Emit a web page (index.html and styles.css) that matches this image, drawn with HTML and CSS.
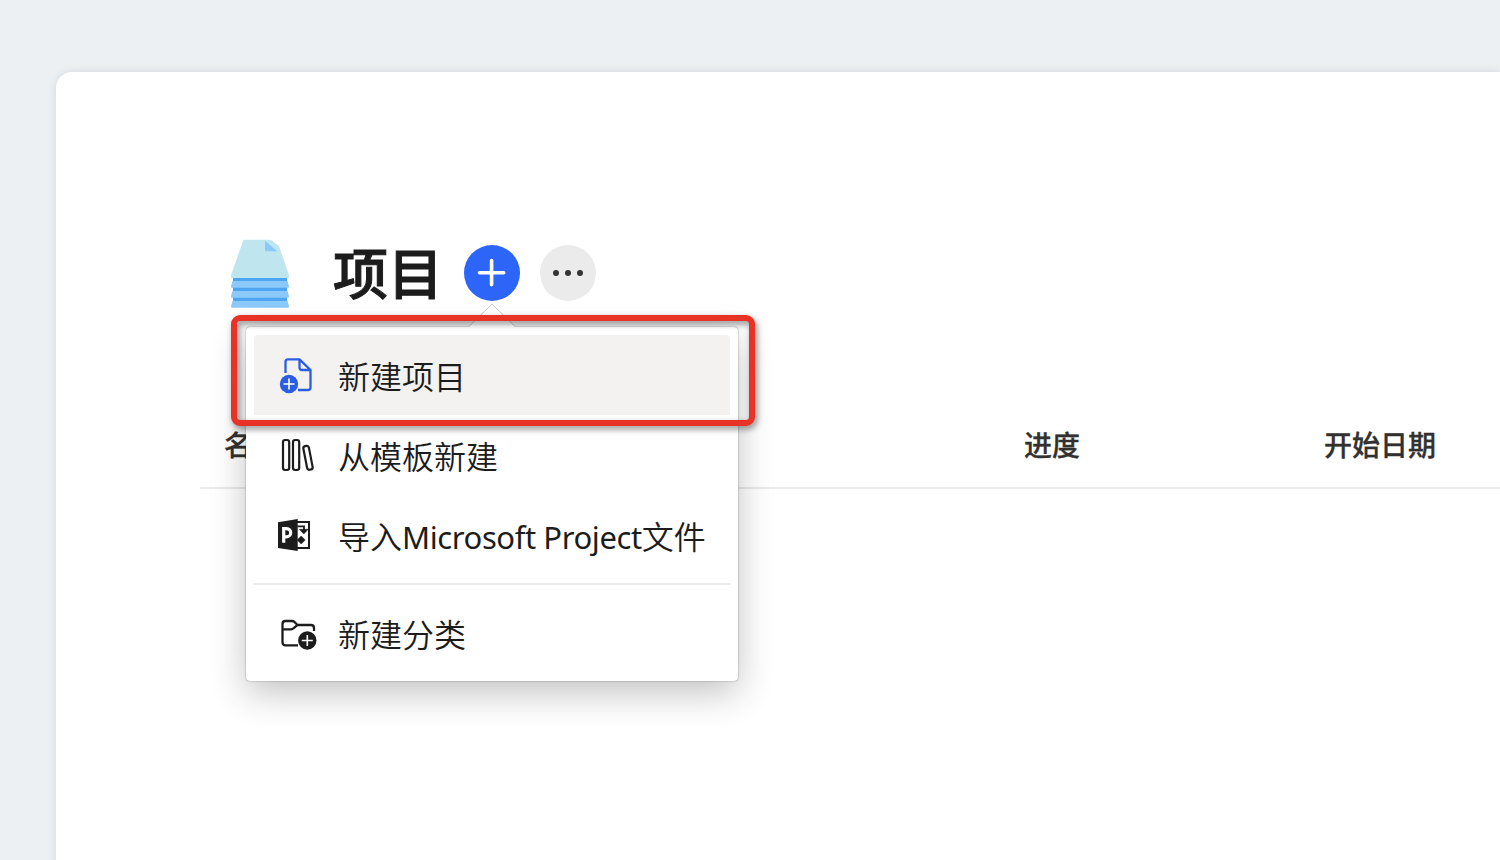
FILE: index.html
```html
<!DOCTYPE html>
<html lang="zh-CN">
<head>
<meta charset="utf-8">
<title>项目</title>
<link rel="stylesheet" href="styles.css">
</head>
<body>
<main class="panel">
  <header class="heading">
    <svg class="logo" width="60" height="70" viewBox="0 0 60 70">
      <path d="M3 38h54v30H3z" fill="#4ea6f3"/>
      <path d="M2.500 42h55l1.500 5.300q.3 1.500-1 1.500H2q-1.300 0-1-1.500zM2.500 52h55l1.500 5.300q.3 1.500-1 1.500H2q-1.300 0-1-1.500zM2.500 62h55l1.500 5.300q.3 1.500-1 1.500H2q-1.300 0-1-1.500z" fill="#8ac9f9"/>
      <path d="M15 .8h24q2 0 3.500 1.200l6 4.800 1.500 3 9 26.500q.8 2.700-1.800 2.700H2.800Q.2 39 1 36.300L13 2q.5-1.200 2-1.200z" fill="#bfe6ee"/>
      <path d="M35 2l12.500 10.200H36q-1 0-1-1z" fill="#8ac9f9"/>
    </svg>
    <h1 class="title">项目</h1>
    <div class="add-wrap">
      <button class="round add" aria-label="新建">
        <svg width="56" height="56" viewBox="0 0 56 56" fill="none" stroke="#fff" stroke-width="3.600" stroke-linecap="round"><path d="M15.500 27.700h24.200M27.600 15.600v24.200"/></svg>
      </button>
      <div class="menu">
        <svg class="arrow" width="48" height="25" viewBox="0 0 48 25"><path d="M1 23.500L24 1 47 23.500V25H1z" fill="#fff"/><path d="M1 23.500L24 1 47 23.500" fill="none" stroke="#c6c6c6" stroke-width="1"/></svg>
        <div class="item active">
          <svg class="icon" width="40" height="40" viewBox="0 0 40 40" fill="none" stroke="#2a5de0" stroke-width="2.300" stroke-linejoin="round">
            <path d="M8.500 18V6.900q0-2.500 2.500-2.500h11.500L33.500 15v17.500q0 2.500-2.500 2.500H21M22.500 4.500v8q0 2.500 2.500 2.500h8.500"/>
            <circle cx="12" cy="29" r="9.200" fill="#2a5de0" stroke="none"/>
            <path d="M6.500 29h11M12 23.500v11" stroke="#fff" stroke-width="1.600"/>
          </svg>
          <span>新建项目</span>
        </div>
        <div class="item">
          <svg class="icon" width="40" height="40" viewBox="0 0 40 40" fill="none" stroke="#1c1c1c" stroke-width="2.200">
            <rect x="6" y="5" width="6.200" height="30" rx="2.200"/><rect x="16" y="5" width="6.200" height="30" rx="2.200"/>
            <rect x="28.200" y="10.800" width="5.600" height="24" rx="2.200" transform="rotate(-11 31 22.800)"/>
          </svg>
          <span>从模板新建</span>
        </div>
        <div class="item">
          <svg class="icon" width="40" height="40" viewBox="0 0 40 40">
            <path d="M20 7h12v26H20" fill="none" stroke="#1c1c1c" stroke-width="2"/>
            <path d="M1 7.200L20.700 4v32L1 33z" fill="#1c1c1c"/>
            <path d="M6.700 27.700V13.600h2.800c5.600 0 5.600 8.200 0 8.200H6.700" fill="none" stroke="#fff" stroke-width="3.200"/>
            <path d="M20.500 11.300H27v4" fill="none" stroke="#1c1c1c" stroke-width="1.800"/>
            <path d="M22.300 14.300h9l-4.500 4.700zM24.200 21l4 4-4 4-4-4z" fill="#1c1c1c" stroke="#1c1c1c" stroke-width=".5"/>
          </svg>
          <span class="import">导入<span class="latin">Microsoft Project</span>文件</span>
        </div>
        <div class="divider"></div>
        <div class="item">
          <svg class="icon" width="40" height="40" viewBox="0 0 40 40" fill="none" stroke="#1c1c1c" stroke-width="2.300" stroke-linejoin="round">
            <path d="M21 32.300H8.500q-3 0-3-3V11q0-3 3-3H15q1.500 0 2.500 1l3 3H34q3 0 3 3v3M5.500 16.300H14q1.500 0 2.500-1l4-3.500"/>
            <circle cx="30.300" cy="27.500" r="9.200" fill="#1c1c1c" stroke="none"/>
            <path d="M24.800 27.500h11M30.300 22v11" stroke="#fff" stroke-width="1.600"/>
          </svg>
          <span>新建分类</span>
        </div>
        <div class="highlight"></div>
      </div>
    </div>
    <button class="round more" aria-label="更多"><i></i><i></i><i></i></button>
  </header>
  <div class="columns">
    <span>名称</span><span>进度</span><span>开始日期</span>
  </div>
</main>
</body>
</html>
```

FILE: styles.css
```css
* { box-sizing: border-box; }
body {
  margin: 0;
  height: 860px;
  overflow: hidden;
  padding: 72px 0 0 56px;
  background: #ecf0f3;
  font-family: "Noto Sans CJK SC", sans-serif;
  color: #1c1c1c;
}
.panel {
  height: 800px;
  padding: 167px 0 0 144px;
  background: #fff;
  border-radius: 16px 0 0 0;
  box-shadow: 0 0 8px rgba(40, 60, 80, .12);
}
.heading {
  display: flex;
  align-items: flex-start;
  height: 70px;
  padding-left: 30px;
}
.title {
  margin: 0 0 0 43px;
  width: 111px;
  font-size: 55px;
  line-height: 62px;
  font-weight: 500;
  -webkit-text-stroke: 1px currentColor;
  white-space: nowrap;
}
.add-wrap { position: relative; margin: 6px 20px 0; }
.round {
  display: flex;
  align-items: center;
  justify-content: center;
  width: 56px;
  height: 56px;
  padding: 0;
  border: 0;
  border-radius: 50%;
}
.add { background: #2d65f8; }
.more { margin-top: 6px; background: #ebebeb; gap: 6px; }
.more i { width: 6px; height: 6px; border-radius: 50%; background: #333; }
.menu {
  position: absolute;
  z-index: 2;
  top: 82px;
  left: -218px;
  width: 492px;
  height: 354px;
  padding: 8px;
  background: #fff;
  border-radius: 4px;
  box-shadow: 0 0 1.5px rgba(0, 0, 0, .55), 0 12px 36px rgba(0, 0, 0, .24);
}
.arrow { position: absolute; left: 222px; top: -24px; }
.item {
  display: flex;
  align-items: center;
  height: 80px;
  padding-left: 23px;
  font-size: 32px;
  font-weight: 350;
  line-height: 48px;
  white-space: nowrap;
}
.active { background: #f3f2f0; border-radius: 4px 4px 0 0; }
.icon { flex: none; margin-right: 21px; }
.import { padding-top: 2px; }
.latin {
  font-family: "Noto Sans", sans-serif;
  font-size: 31px;
  font-weight: 400;
  letter-spacing: -.41px;
}
.divider { height: 2px; margin: 8px 0; background: #ebebeb; }
.highlight {
  position: absolute;
  left: -15px;
  top: -12px;
  width: 524px;
  height: 111px;
  border: 6px solid #e83225;
  border-radius: 9px;
  filter: drop-shadow(2px 3px 3px rgba(0, 0, 0, .45));
}
.columns {
  display: grid;
  grid-template-columns: 800px 300px 1fr;
  height: 82px;
  margin-top: 98px;
  padding: 17px 0 0 24px;
  border-bottom: 2px solid #eaeaea;
  font-size: 28px;
  line-height: 40px;
  font-weight: 500;
  -webkit-text-stroke: .3px currentColor;
  color: #323130;
}
```
